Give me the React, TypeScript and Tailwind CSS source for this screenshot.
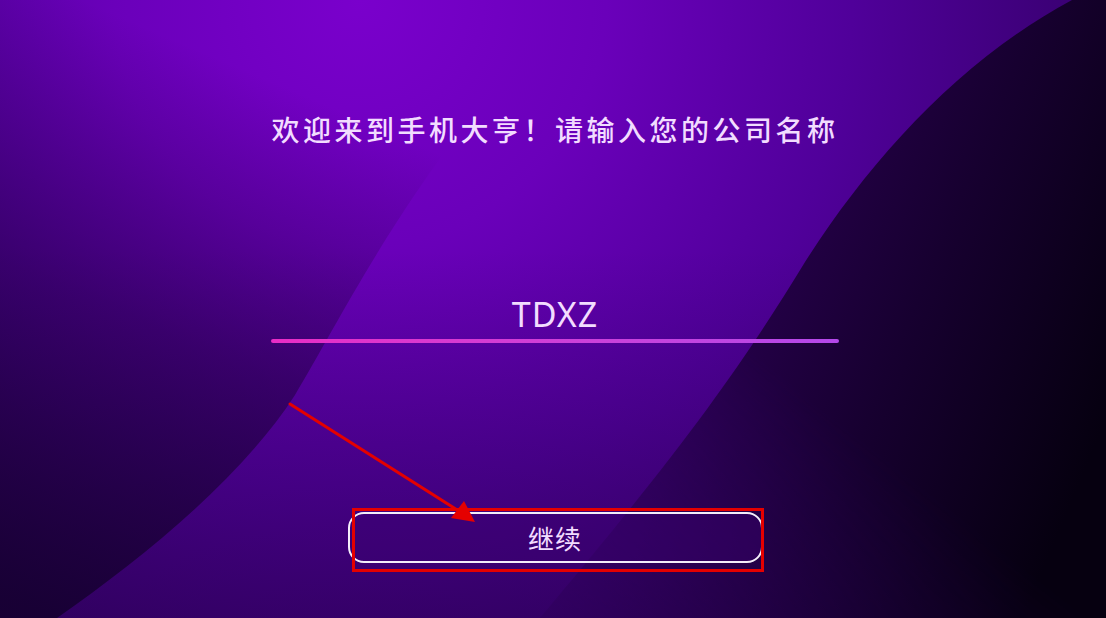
import React from "react";

function Background() {
  return (
    <svg
      className="absolute inset-0 h-full w-full"
      viewBox="0 0 1106 618"
      preserveAspectRatio="none"
    >
      <defs>
        <radialGradient id="base" gradientUnits="userSpaceOnUse" cx="360" cy="0" r="820">
          <stop offset="0" stopColor="#7a00cc" />
          <stop offset="0.3" stopColor="#6a00ba" />
          <stop offset="0.6" stopColor="#50009a" />
          <stop offset="1" stopColor="#300062" />
        </radialGradient>
        <linearGradient id="leftDark" gradientUnits="userSpaceOnUse" x1="60" y1="618" x2="300" y2="60">
          <stop offset="0" stopColor="#12002a" stopOpacity="0.8" />
          <stop offset="0.5" stopColor="#16002e" stopOpacity="0.45" />
          <stop offset="0.95" stopColor="#16002e" stopOpacity="0" />
        </linearGradient>
        <linearGradient id="rightDark" gradientUnits="userSpaceOnUse" x1="700" y1="250" x2="1106" y2="420">
          <stop offset="0" stopColor="#2a0052" />
          <stop offset="0.5" stopColor="#170030" />
          <stop offset="1" stopColor="#060010" />
        </linearGradient>
        <linearGradient id="rightFade" gradientUnits="userSpaceOnUse" x1="560" y1="618" x2="760" y2="360">
          <stop offset="0" stopColor="#ffffff" stopOpacity="0.3" />
          <stop offset="1" stopColor="#ffffff" stopOpacity="1" />
        </linearGradient>
        <mask id="rightMask" maskUnits="userSpaceOnUse" x="0" y="0" width="1106" height="618">
          <rect x="0" y="0" width="1106" height="618" fill="url(#rightFade)" />
        </mask>
        <linearGradient id="bottomShade" gradientUnits="userSpaceOnUse" x1="0" y1="250" x2="0" y2="618">
          <stop offset="0" stopColor="#1a0034" stopOpacity="0" />
          <stop offset="1" stopColor="#1a0034" stopOpacity="0.35" />
        </linearGradient>
      </defs>
      <rect x="0" y="0" width="1106" height="618" fill="url(#base)" />
      <rect x="0" y="0" width="1106" height="618" fill="url(#bottomShade)" />
      <path
        d="M0,618 L57,618 C140,560 240,480 295,395 C340,320 390,215 500,80 L520,0 L0,0 Z"
        fill="url(#leftDark)"
      />
      <path
        d="M1072,0 C960,60 870,160 805,262 C745,360 690,440 540,618 L1106,618 L1106,0 Z"
        fill="url(#rightDark)"
        mask="url(#rightMask)"
      />
    </svg>
  );
}

function Annotation() {
  return (
    <svg
      className="pointer-events-none absolute inset-0 h-full w-full"
      viewBox="0 0 1106 618"
      preserveAspectRatio="none"
    >
      <line x1="290" y1="404" x2="462" y2="513" stroke="#e50000" strokeWidth="3" strokeLinecap="round" />
      <polygon points="475,522 451,518 464,501" fill="#e50000" />
      <rect x="353.5" y="509.5" width="409" height="61" fill="none" stroke="#e50000" strokeWidth="3" />
    </svg>
  );
}

export default function App() {
  return (
    <div className="relative h-[618px] w-full overflow-hidden bg-[#3a0070]">
      <Background />
      <div className="relative flex flex-col items-center pl-[4px]">
        <h1
          className="mt-[110px] text-[28px] leading-[38px] tracking-[3.5px] text-[#f2dcff] font-medium"
          style={{ fontFamily: '"Noto Sans CJK SC", "Noto Sans", sans-serif' }}
        >
          欢迎来到手机大亨！请输入您的公司名称
        </h1>
        <div className="mt-[146px] flex flex-col items-center">
          <div
            className="text-[34px] leading-[40px] tracking-[1px] text-[#f2dcff]"
            style={{ fontFamily: '"Noto Sans", sans-serif' }}
          >
            TDXZ
          </div>
          <div className="mt-[5px] h-[4px] w-[568px] rounded-full bg-gradient-to-r from-[#e92cc6] to-[#b448ea]" />
        </div>
        <button
          className="mt-[169px] flex h-[51px] w-[415px] items-center justify-center rounded-[16px] border-[2.5px] border-[#f4eefa] bg-[#3a0070]/40 text-[26px] text-[#f2dcff]"
          style={{ fontFamily: '"Noto Sans CJK SC", "Noto Sans", sans-serif' }}
        >
          <span className="tracking-[1px] font-normal">继续</span>
        </button>
      </div>
      <Annotation />
    </div>
  );
}
